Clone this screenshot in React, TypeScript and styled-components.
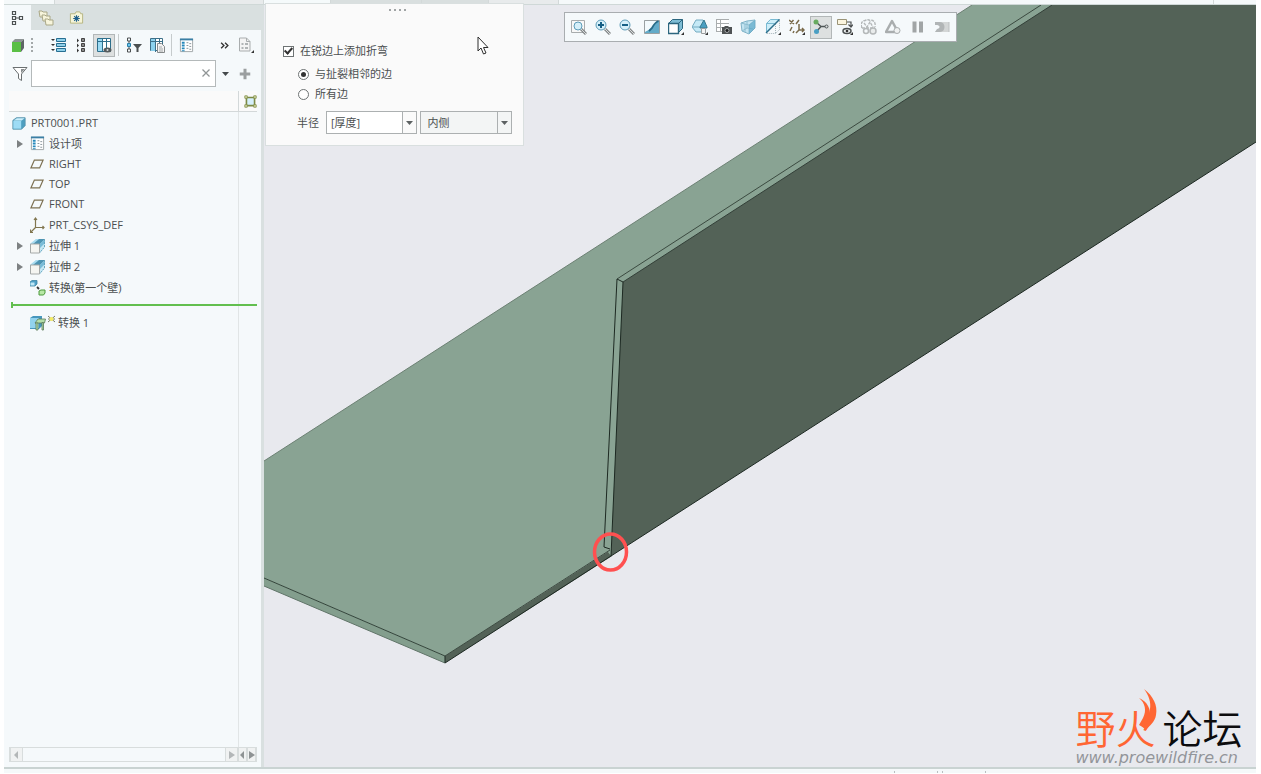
import React from "react";
import styled, { createGlobalStyle } from "styled-components";

const GlobalStyle = createGlobalStyle`
  *, *::before, *::after { box-sizing: border-box; }
  body { margin: 0; background: #fff; }
  button, input, select { font: inherit; color: inherit; }
`;

const Shell = styled.div`
  display: flex;
  flex-direction: column;
  min-height: 100vh;
  padding: 0 5px 1px 4px;
  font: 11px/16px "Open Sans", "Noto Sans CJK SC", sans-serif;
  color: #4b4f50;
`;

const TabStrip = styled.div`
  display: flex;
  height: 5px;
  flex: none;
  background: #f5f9fa;
  border-bottom: 1px solid #cfd8d7;
`;

const StripTab = styled.div<{ $width: number; $tone: string }>`
  flex: none;
  width: ${(p) => p.$width}px;
  background: ${(p) => p.$tone};
  border-right: 1px solid #d3d9d9;
`;

const Main = styled.main`
  display: flex;
  flex: 1;
`;

const StatusStrip = styled.footer`
  display: flex;
  align-items: flex-end;
  justify-content: flex-end;
  gap: 42px;
  height: 6px;
  flex: none;
  padding-right: 270px;
  background: #f5f9fa;
  border-top: 2px solid #c9d3d2;
`;

const StatusTick = styled.i<{ $double?: boolean }>`
  width: ${(p) => (p.$double ? 6 : 1)}px;
  height: 2px;
  border: solid #b9bfc0;
  border-width: 0 ${(p) => (p.$double ? 1 : 0)}px 0 1px;
`;

/* ---------- model tree panel ---------- */

const Sidebar = styled.aside`
  display: flex;
  flex-direction: column;
  flex: none;
  width: 260px;
  background: #f5f9fb;
  border-right: 3px solid #d9e0e0;
`;

const PanelTabs = styled.div`
  display: flex;
  height: 25px;
  background: #d9e0e0;
`;

const PanelTab = styled.button<{ $active?: boolean }>`
  display: flex;
  align-items: center;
  justify-content: center;
  width: ${(p) => (p.$active ? 27 : 30)}px;
  padding: 0;
  border: 0;
  background: ${(p) => (p.$active ? "#f5f9fb" : "transparent")};
`;

const TreeToolbar = styled.div`
  display: flex;
  align-items: center;
  height: 30px;
  padding: 0 4px 0 5px;
`;

const ToolButton = styled.button<{ $width?: number; $active?: boolean }>`
  display: flex;
  align-items: center;
  justify-content: center;
  flex: none;
  width: ${(p) => p.$width ?? 22}px;
  height: 23px;
  padding: 0;
  border: 1px solid ${(p) => (p.$active ? "#b2b7b8" : "transparent")};
  background: ${(p) => (p.$active ? "#dde0e0" : "transparent")};
  color: #44494b;
`;

const Grip = styled.i`
  width: 2px;
  height: 14px;
  margin: 0 14px 0 2px;
  background: repeating-linear-gradient(#a3a8a9 0 2px, transparent 2px 4px);
`;

const Divider = styled.i`
  width: 1px;
  height: 22px;
  margin: 0 3px;
  background: #c6cbcc;
`;

const Spacer = styled.span`
  flex: 1;
`;

const SearchRow = styled.form`
  display: flex;
  align-items: center;
  padding: 0 5px;
`;

const SearchBox = styled.div`
  display: flex;
  flex: 1;
  min-width: 0;
  height: 27px;
  background: #fff;
  border: 1px solid #b4b9ba;
`;

const SearchInput = styled.input`
  flex: 1;
  min-width: 0;
  padding: 0 4px;
  border: 0;
  outline: 0;
  background: transparent;
`;

const TreePanel = styled.div`
  display: flex;
  flex-direction: column;
  flex: 1;
  margin: 4px 4px 0 5px;
  background: linear-gradient(#e1e5e6, #e1e5e6) no-repeat right 18px top / 1px 100%;
`;

const ColumnHeader = styled.div`
  display: flex;
  justify-content: flex-end;
  height: 21px;
  border-bottom: 1px solid #d3d8d9;
  background: #fafafa;
`;

const HeaderCell = styled.span`
  display: flex;
  justify-content: flex-end;
  align-items: center;
  width: 19px;
  border-left: 1px solid #d3d8d9;
`;

const TreeList = styled.ul`
  margin: 0;
  padding: 0;
  list-style: none;
`;

const TreeRow = styled.li<{ $root?: boolean; $datum?: boolean }>`
  display: flex;
  align-items: center;
  gap: 3px;
  height: ${(p) => (p.$datum ? 20 : 21)}px;
  padding-left: 3px;
  white-space: nowrap;
`;

const Expander = styled.button`
  display: flex;
  align-items: center;
  justify-content: center;
  width: 15px;
  height: 16px;
  padding: 0;
  border: 0;
  background: none;
  color: #7d8182;
`;

const ExpanderGap = styled.span`
  width: 15px;
`;

const RowIcon = styled.span<{ $wide?: boolean }>`
  display: flex;
  justify-content: ${(p) => (p.$wide ? "space-between" : "flex-start")};
  width: ${(p) => (p.$wide ? 25 : 16)}px;
`;

const InsertLine = styled.div`
  display: flex;
  align-items: center;
  margin: 4px 0 4px 2px;
  &::before {
    content: "";
    width: 2px;
    height: 6px;
    background: #62bf4f;
  }
  &::after {
    content: "";
    flex: 1;
    height: 2px;
    background: #62bf4f;
  }
`;

const ScrollRow = styled.div`
  display: flex;
  height: 15px;
  margin: 0 4px 5px 5px;
  border: 1px solid #d8dddd;
`;

const ScrollButton = styled.button<{ $width: number; $faint?: boolean }>`
  display: flex;
  align-items: center;
  justify-content: center;
  width: ${(p) => p.$width}px;
  padding: 0;
  border: 0;
  border-right: 1px solid #d8dddd;
  border-left: 1px solid #d8dddd;
  background: #f0f2f2;
  color: ${(p) => (p.$faint ? "#b3b7b8" : "#8e9394")};
`;

/* ---------- graphics area ---------- */

const Viewport = styled.section`
  position: relative;
  flex: 1;
  min-width: 0;
  background: #e8e9ee;
`;

const Scene = styled.svg`
  position: absolute;
  inset: 0;
  width: 100%;
  height: 100%;
`;

const ViewToolbar = styled.div`
  position: absolute;
  top: 7px;
  left: 300px;
  display: flex;
  align-items: center;
  justify-content: space-between;
  width: 393px;
  height: 30px;
  padding: 0 3px;
  background: #f5f9fb;
  border: 1px solid #a9adb0;
`;

const OptionsPanel = styled.form`
  position: absolute;
  top: -2px;
  left: 1px;
  width: 259px;
  padding: 5px 11px 11px 17px;
  background: #fafafa;
  border: 1px solid #d9dfdf;
`;

const DragHandle = styled.div`
  width: 17px;
  height: 2px;
  margin: 0 auto 32px;
  background: repeating-linear-gradient(90deg, #a0a4a5 0 2px, transparent 2px 5px);
`;

const Choice = styled.label<{ $nested?: boolean }>`
  display: flex;
  align-items: center;
  gap: 6px;
  height: ${(p) => (p.$nested ? 20 : 16)}px;
  margin-left: ${(p) => (p.$nested ? 15 : 0)}px;
`;

const FirstChoice = styled.div`
  padding-bottom: 5px;
`;

const CheckBox = styled.input`
  appearance: none;
  display: grid;
  place-items: center;
  width: 11px;
  height: 11px;
  margin: 0;
  background: #fff;
  border: 1px solid #6e7374;
  &:checked::after {
    content: "";
    width: 5px;
    height: 8px;
    border: solid #333;
    border-width: 0 2px 2px 0;
    transform: translateY(-1px) rotate(42deg);
  }
`;

const Radio = styled.input`
  appearance: none;
  display: grid;
  place-items: center;
  width: 11px;
  height: 11px;
  margin: 0;
  background: #fff;
  border: 1px solid #6e7374;
  border-radius: 50%;
  &:checked::after {
    content: "";
    width: 5px;
    height: 5px;
    border-radius: 50%;
    background: #333;
  }
`;

const RadiusRow = styled.div`
  display: flex;
  align-items: center;
  gap: 3px;
  margin: 7px 0 0 14px;
`;

const RadiusLabel = styled.label`
  width: 26px;
  white-space: nowrap;
`;

const Combo = styled.div<{ $muted?: boolean }>`
  display: grid;
  grid-template-columns: 1fr 14px;
  width: 92px;
  height: 23px;
  background: ${(p) => (p.$muted ? "#f3f5f5" : "#fff")};
  border: 1px solid #acb0b1;
`;

const ComboInput = styled.input`
  width: 100%;
  min-width: 0;
  padding: 0 4px;
  border: 0;
  outline: 0;
  background: transparent;
`;

const ComboSelect = styled.select`
  grid-area: 1 / 1 / 2 / 3;
  appearance: none;
  padding: 0 6px;
  border: 0;
  outline: 0;
  background: transparent;
`;

const ComboArrow = styled.span`
  grid-area: 1 / 2;
  display: flex;
  align-items: center;
  justify-content: center;
  border-left: 1px solid #acb0b1;
  color: #5c6162;
  pointer-events: none;
`;

const ComboButton = styled.button`
  display: flex;
  align-items: center;
  justify-content: center;
  padding: 0;
  border: 0;
  border-left: 1px solid #acb0b1;
  background: #fafafa;
  color: #5c6162;
`;

const Pointer = styled.svg`
  position: absolute;
  top: 31px;
  left: 213px;
`;

const Watermark = styled.div`
  position: absolute;
  right: 12px;
  bottom: 0;
  text-align: right;
  white-space: nowrap;
`;

const BrandName = styled.div`
  display: flex;
  gap: 7px;
  font: 350 40px/44px "Noto Sans CJK SC", sans-serif;
  color: #0c0c0e;
`;

const BrandAccent = styled.span`
  color: #ff6633;
`;

const BrandUrl = styled.div`
  padding-right: 6px;
  font: italic 16px/18px "DejaVu Sans", sans-serif;
  color: #93959a;
`;

const Flame = styled.svg`
  position: absolute;
  top: -16px;
  left: 58px;
`;

/* ---------- icons ---------- */

type IconProps = { size?: number; children: React.ReactNode };
const Icon = ({ size = 16, children }: IconProps) => (
  <svg width={size} height={size} viewBox="0 0 16 16" fill="none" aria-hidden="true">
    {children}
  </svg>
);

const ArrowDown = () => (
  <svg width="7" height="4" viewBox="0 0 7 4" aria-hidden="true"><path d="M0 0h7L3.500 4z" fill="currentColor" /></svg>
);
const ArrowRight = ({ flip }: { flip?: boolean }) => (
  <svg width="7" height="8" viewBox="0 0 7 8" aria-hidden="true">
    <path d={flip ? "M5 0v8L1 4z" : "M1 0v8l6-4z"} fill="currentColor" />
  </svg>
);

const Corner = () => <path d="M16 13v3h-3z" fill="#333" />;

const StructureIcon = () => (
  <Icon><path d="M2.500 1.500h3v3h-3zM2.500 6.500h3v3h-3zM2.500 11.500h3v3h-3zM9.500 6.500h3v3h-3zM6 8h3" stroke="#4c5152" strokeWidth="1.200" /></Icon>
);
const FoldersIcon = () => (
  <Icon>
    {[[0, 0], [3, 4], [6, 8]].map(([x, y]) => (
      <path key={x} transform={`translate(${x} ${y})`} d="M1 1h3l1 1h4v5H2z" fill="#f7f5dc" stroke="#a9a786" />
    ))}
  </Icon>
);
const FavoritesIcon = () => (
  <Icon size={15}>
    <path d="M1.500 4h5l1-2h4l1 2h2v10h-13z" fill="#f6f5d8" stroke="#b5b380" />
    <path d="M8 5.500v7M4.500 9h7M5.500 6.500l5 5M10.500 6.500l-5 5" stroke="#1f5f8c" strokeWidth="1.200" />
  </Icon>
);
const GreenCubeIcon = () => (
  <Icon>
    <path d="M1 5l3-3h9l-3 3z" fill="#8d9494" />
    <path d="M10 5l3-3v9l-3 4z" fill="#5e6565" />
    <path d="M1 5h9v10H1z" fill="#5abf45" />
  </Icon>
);
const ListBlueIcon = () => (
  <Icon>
    <path d="M5.500 1.500h9v3h-9zM5.500 6.500h9v3h-9zM5.500 11.500h9v3h-9z" fill="#8fd0ea" stroke="#276f92" />
    <path d="M0 2h4L2 4zM0 7h4L2 9zM0 12h4l-2 2z" fill="#333" />
  </Icon>
);
const TreeCollapseIcon = () => (
  <Icon>
    <path d="M7.500 1.500h3v3h-3zM7.500 6.500h3v3h-3zM7.500 11.500h3v3h-3z" fill="#888" stroke="#444" />
    <path d="M3 1.500v4l2-2zM3 6.500v4l2-2zM3 11.500v4l2-2z" fill="#333" />
  </Icon>
);
const ColumnsEyeIcon = () => (
  <Icon>
    <path d="M1.500 1.500h13v13h-13z" fill="#fff" stroke="#2e6f8c" />
    <path d="M2 2h4v12H2z" fill="#9ddcf5" />
    <path d="M1 4.500h14M6.500 1v14M10.500 1v11" stroke="#2e6f8c" />
    <ellipse cx="11.500" cy="13" rx="4" ry="2.500" fill="#555b5d" /><circle cx="11.500" cy="13" r="1" fill="#ddd" />
  </Icon>
);
const TreeFilterIcon = () => (
  <Icon>
    <path d="M1.500 1h3v3h-3zM1.500 12h3v3h-3zM3 4v8" stroke="#4b4f50" />
    <path d="M1.500 6.500h3v3h-3z" fill="#6cc4ec" stroke="#2a7fa8" />
    <path d="M7 7h9l-3.500 4v4h-2v-4z" fill="#4b4f50" />
  </Icon>
);
const ColumnsDocIcon = () => (
  <Icon>
    <path d="M1.500 1.500h12v12h-12z" fill="#fff" stroke="#3d7089" />
    <path d="M2 2h4v12H2z" fill="#8cd2ee" /><path d="M1 4.500h13M6.500 1v14M10.500 1v5" stroke="#3d7089" />
    <path d="M8.500 6.500h4l3 3v6h-7z" fill="#f3f3f3" stroke="#85898a" /><path d="M10 10h3M10 12h4M10 14h4" stroke="#a5a9aa" />
  </Icon>
);
const DesignListIcon = ({ size = 15 }: { size?: number }) => (
  <Icon size={size}>
    <path d="M1.500 1.500h13v13h-13z" fill="#fff" stroke="#9fa5a6" /><path d="M1 1.500h14" stroke="#3a7fa5" strokeWidth="2" />
    <path d="M4.500 4v10" stroke="#2588bb" strokeWidth="3" strokeDasharray="2 1" />
    <path d="M8 5h2M8 8h2M8 11h2M11 6h2M11 9h2M11 12h2" stroke="#87949a" />
  </Icon>
);
const PageIcon = () => (
  <Icon>
    <path d="M1.500 1h7l3.500 3.500V14H1.500z" fill="#f4f4f4" stroke="#a9adae" /><path d="M8.500 1v3.500H12" stroke="#a9adae" />
    <path d="M3.500 7h2M3.500 11h2M7 7h3M7 11h3" stroke="#b0b4b5" strokeWidth="2" /><Corner />
  </Icon>
);
const FunnelIcon = () => (
  <Icon><path d="M1 1.500h14L9.500 8v6.500l-3-2V8z" fill="#fff" stroke="#6b7071" /><path d="M9 3h4L9 7z" fill="#888d8e" /></Icon>
);
const PlusIcon = () => (
  <Icon size={12}><path d="M8 1v14M1 8h14" stroke="#9b9fa0" strokeWidth="4" /></Icon>
);
const CloseIcon = () => (
  <Icon size={8}><path d="M1 1l14 14M15 1L1 15" stroke="#909596" strokeWidth="2.500" /></Icon>
);
const ColumnKeyIcon = () => (
  <Icon size={13}>
    <path d="M3 3h10v10H3z" fill="#d5effa" stroke="#7c8a45" strokeWidth="2" />
    <path d="M1 1h3v3H1zM12 1h3v3h-3zM1 12h3v3H1zM12 12h3v3h-3z" fill="#e5e9ba" stroke="#7c8a45" />
  </Icon>
);
const PartIcon = () => (
  <Icon size={14}>
    <path d="M1 5l4-3h10v9l-4 4H1z" fill="#4e9fc0" stroke="#5793ab" strokeLinejoin="round" /><path d="M1.500 5.500h9v9h-9z" fill="#9edcf5" /><path d="M2 5l3.500-2.500h9L11 5z" fill="#cdeffb" />
  </Icon>
);
const PlaneIcon = () => (
  <Icon size={14}><path d="M5 3.500h10L11 12.500H1z" stroke="#7d7153" strokeWidth="1.400" /></Icon>
);
const CsysIcon = () => (
  <Icon><path d="M5.500 1v9.500H14M5.500 10.500L1 15M4 3l1.500-2L7 3M12.500 9l1.500 1.500-1.500 1.500M.5 12.500V15.500H3" stroke="#81764f" strokeWidth="1.200" /></Icon>
);
const ExtrudeIcon = () => (
  <Icon>
    <path d="M0 6l6-5h9v8l-5 6z" fill="#c7e8f4" /><path d="M0 6l6-5h3L3 6z" fill="#a9dcf0" /><path d="M3 6l6-5h6l-5 5z" fill="#4e94b2" />
    <path d="M10 6l5-5v4l-5 5z" fill="#79bcd8" /><path d="M14.500 1v8l-5 6" stroke="#6aa7bf" strokeDasharray="2 1" />
    <path d="M.5 6h9v9h-9z" fill="#f5f5f1" stroke="#a5a9a8" />
  </Icon>
);
const ConvertIcon = () => (
  <Icon>
    <path d="M0 2l2-1.500h5V4L5 6H0z" fill="#4e9fc6" stroke="#3e84a3" strokeWidth=".8" /><path d="M.5 2.500h4v3h-4z" fill="#bfe7f7" />
    <path d="M7 7l2 2" stroke="#333" strokeWidth="1.800" /><path d="M9 11l2-1h4v3l-1.500 2H9z" fill="#b8e8a6" stroke="#4d9a3c" />
  </Icon>
);
const ConvertWallIcon = () => (
  <Icon>
    <path d="M0 3l3-2h9v10l-3 3H0z" fill="#4797bd" /><path d="M0 3h9v10H0z" fill="#92d3ee" />
    <path d="M5 8l3-4h7.500l-1 4z" fill="#b4dfaa" stroke="#5b7b5a" strokeWidth=".8" />
    <path d="M5.500 8H8v7H6V9zM12 7.500h1.500V15H12z" fill="#b4dfaa" stroke="#5b7b5a" strokeWidth=".8" />
  </Icon>
);
const SparkIcon = () => (
  <svg width="7" height="10" viewBox="0 0 7 10" aria-hidden="true">
    <path d="M0 1l7 6M7 1L0 7M0 4h7" stroke="#777b65" /><circle cx="3.500" cy="4" r="2" fill="#f4ec62" />
  </svg>
);

const Lens = ({ sign }: { sign?: "plus" | "minus" }) => (
  <Icon>
    {!sign && <path d="M.5 1.500h13v12H.5z" fill="#f8f8f8" stroke="#a8acad" />}
    <path d="M10 10l5 5" stroke="#85898a" strokeWidth="3" /><path d="M10 10l5 5" stroke="#d9dcdd" />
    <circle cx={sign ? 6 : 7} cy={sign ? 6 : 7} r={sign ? 5 : 4} fill="#d5eff9" stroke="#5c9cb8" />
    {sign && <path d={sign === "plus" ? "M3 6h6M6 3v6" : "M3 6h6"} stroke="#155f85" strokeWidth="2" />}
  </Icon>
);
const RepaintIcon = () => (
  <Icon>
    <path d="M.5 1.500h15v13H.5z" fill="#63abc9" stroke="#9aa0a2" /><path d="M1 2h13.500C12 3 9 7 8 9 6 11 4 11 1 13z" fill="#f3fafd" />
    <path d="M14.500 2C12 3 9 7 8 9l-3 3" stroke="#286b88" strokeWidth="1.800" />
  </Icon>
);
const DisplayStyleIcon = () => (
  <Icon><path d="M.5 4.500l4-4h10v9l-4 4" fill="#7ebdd5" stroke="#2b667f" /><path d="M.5 4.500h10v10H.5z" fill="#fff" stroke="#2b667f" strokeWidth="1.400" /><path d="M10.500 4.500l4-4" stroke="#2b667f" /><Corner /></Icon>
);
const SavedViewsIcon = () => (
  <Icon>
    <path d="M0 8l4-7h7l2 7-2 5H4z" fill="#c5e9f6" stroke="#74abc1" /><path d="M0 8h13" stroke="#74abc1" />
    <path d="M8 8l4-7 3 7v1H8z" fill="#4a9fc2" stroke="#36798f" /><path d="M9.500 9.500h4v5h-4z" fill="#f5f5f5" stroke="#989d9e" /><Corner />
  </Icon>
);
const ViewManagerIcon = () => (
  <Icon>
    <path d="M.5.500h12v13H.5z" fill="#fff" /><path d="M0 .5h13M0 4.500h13M0 8.500h13M0 12.500h7M4.500 0v13M.5 0v13" stroke="#a9adae" />
    <path d="M6 8h2l1-1h3l1 1h3v7H6z" fill="#4f5354" /><circle cx="11" cy="11.500" r="2" fill="#1d1f20" stroke="#a5a8a9" />
  </Icon>
);
const PerspectiveIcon = () => (
  <Icon>
    <path d="M1 4l6-2 8-1v8l-6 6-7-3z" fill="#c4e5f2" stroke="#7fb2c7" /><path d="M1 4l8 2v9M9 6l6-5M5 5v8M7 2v7l-5 3M7 9l6 1" stroke="#8dbdd0" />
    <path d="M9 6l6-5v8l-6 6z" fill="#5da8c7" opacity=".7" />
  </Icon>
);
const SectionIcon = () => (
  <Icon>
    <path d="M1.500 4.500l4-4h9v10l-4 4h-9zM10.500 5v9M2 4.500h8" stroke="#a5b4ba" strokeDasharray="1 1" /><path d="M1 4.500l4-4h9L1.500 14z" fill="#c3ebf9" opacity=".8" />
    <path d="M1.500 13V4.500l4-4h8.500M1.500 4.500h8" stroke="#79bad3" /><path d="M1 14L14.500.5" stroke="#2d6f8b" strokeWidth="1.500" /><Corner />
  </Icon>
);
const DatumFilterIcon = () => (
  <Icon><path d="M0 1l5 4M4.500 1L1 5M7 5l3-4M1 12l2-4M4 14l1-2M10 5v6h4M10 11l-3 3M13 9l2 2-2 2" stroke="#7a6b4b" strokeWidth="1.500" /><Corner /></Icon>
);
const SpinCenterIcon = () => (
  <Icon>
    <path d="M3 3l5 4.500L4 12M8 7.500h5" stroke="#4e5556" strokeWidth="1.400" /><circle cx="3" cy="3" r="2.500" fill="#68aa60" />
    <circle cx="3.500" cy="12.500" r="2.500" fill="#4a9fc3" /><circle cx="13.500" cy="7.500" r="1.500" fill="#dde0e0" stroke="#4e5556" />
  </Icon>
);
const AnnotationIcon = () => (
  <Icon>
    <path d="M.5.500h9v5h-9z" fill="#fbf5df" stroke="#999377" /><path d="M10 3h4v4M11.500 5.500L14 8l2-2.500" stroke="#4b4f50" strokeWidth="1.200" />
    <ellipse cx="10" cy="12" rx="4" ry="2.500" fill="#e9eded" stroke="#4b4f50" strokeWidth="1.500" /><circle cx="10" cy="12" r="1.300" fill="#333" /><Corner />
  </Icon>
);
const MeshIcon = () => (
  <Icon>
    <path d="M1 9C-.5 6 0 2 4 1.500c2-1 4-1 5 0C12 .5 15 3 14 8M1 9h13M3 4l3 4 3-5 3 5" stroke="#b4b8b9" strokeWidth="1.400" strokeDasharray="3 1" />
    <circle cx="5" cy="12" r="2.500" stroke="#b4b8b9" strokeWidth="1.500" /><circle cx="12" cy="12" r="3" fill="#e9ecec" stroke="#b4b8b9" strokeWidth="1.500" />
  </Icon>
);
const WarningIcon = () => (
  <Icon><path d="M7 2l6 11H1z" stroke="#a9adae" strokeWidth="2.500" strokeLinejoin="round" /><circle cx="12" cy="11.500" r="3" fill="#eff1f1" stroke="#a9adae" /></Icon>
);
const PauseIcon = () => <Icon><path d="M4.500 2.500v11M11 2.500v11" stroke="#a1a5a6" strokeWidth="4" /></Icon>;
const ResumeIcon = () => (
  <Icon>
    <path d="M1 3h14v10H1l5-5z" fill="#d3d6d6" /><path d="M1 3h5c6 0 6 10 0 10H1l2-3c3 0 4-4 0-4H1z" fill="#b1b5b6" />
    <path d="M15 3v10" stroke="#bbbfc0" />
  </Icon>
);

/* ---------- data ---------- */

type Node = { label: string; icon: React.ReactNode; datum?: boolean; expandable?: boolean };

const NODES: Node[] = [
  { label: "设计项", icon: <DesignListIcon />, expandable: true },
  { label: "RIGHT", icon: <PlaneIcon />, datum: true },
  { label: "TOP", icon: <PlaneIcon />, datum: true },
  { label: "FRONT", icon: <PlaneIcon />, datum: true },
  { label: "PRT_CSYS_DEF", icon: <CsysIcon /> },
  { label: "拉伸 1", icon: <ExtrudeIcon />, expandable: true },
  { label: "拉伸 2", icon: <ExtrudeIcon />, expandable: true },
  { label: "转换(第一个壁)", icon: <ConvertIcon /> },
];

const VIEW_TOOLS: { name: string; icon: React.ReactNode; active?: boolean }[] = [
  { name: "重新调整", icon: <Lens /> },
  { name: "放大", icon: <Lens sign="plus" /> },
  { name: "缩小", icon: <Lens sign="minus" /> },
  { name: "重画", icon: <RepaintIcon /> },
  { name: "显示样式", icon: <DisplayStyleIcon /> },
  { name: "已保存方向", icon: <SavedViewsIcon /> },
  { name: "视图管理器", icon: <ViewManagerIcon /> },
  { name: "透视图", icon: <PerspectiveIcon /> },
  { name: "截面", icon: <SectionIcon /> },
  { name: "基准显示过滤器", icon: <DatumFilterIcon /> },
  { name: "旋转中心", icon: <SpinCenterIcon />, active: true },
  { name: "注释显示", icon: <AnnotationIcon /> },
  { name: "仿真", icon: <MeshIcon /> },
  { name: "警告", icon: <WarningIcon /> },
  { name: "暂停", icon: <PauseIcon /> },
  { name: "继续", icon: <ResumeIcon /> },
];

const STRIP_TABS = [
  { width: 51, tone: "#f5f9fa" },
  { width: 209, tone: "#e8ebec" },
  { width: 67, tone: "#f5fafb" },
  { width: 91, tone: "#d9dfdf" },
  { width: 67, tone: "#d9dfdf" },
  { width: 70, tone: "#e8ebec" },
  { width: 655, tone: "#f5f9fa" },
];

/* ---------- sections ---------- */

const ModelTree = () => (
  <Sidebar>
    <PanelTabs>
      <PanelTab type="button" $active aria-label="模型树"><StructureIcon /></PanelTab>
      <PanelTab type="button" aria-label="文件夹浏览器"><FoldersIcon /></PanelTab>
      <PanelTab type="button" aria-label="收藏夹"><FavoritesIcon /></PanelTab>
    </PanelTabs>
    <TreeToolbar>
      <ToolButton type="button" $width={20} aria-label="模型"><GreenCubeIcon /></ToolButton>
      <Grip />
      <ToolButton type="button" $width={24} aria-label="全部展开"><ListBlueIcon /></ToolButton>
      <ToolButton type="button" aria-label="全部折叠"><TreeCollapseIcon /></ToolButton>
      <ToolButton type="button" $active aria-label="显示列"><ColumnsEyeIcon /></ToolButton>
      <Divider />
      <ToolButton type="button" $width={24} aria-label="树过滤器"><TreeFilterIcon /></ToolButton>
      <ToolButton type="button" aria-label="树列"><ColumnsDocIcon /></ToolButton>
      <Divider />
      <ToolButton type="button" aria-label="设计项"><DesignListIcon /></ToolButton>
      <Spacer />
      <ToolButton type="button" aria-label="更多">
        <Icon size={9}><path d="M2 3l5 5-5 5M9 3l5 5-5 5" stroke="#333" strokeWidth="2.400" /></Icon>
      </ToolButton>
      <ToolButton type="button" aria-label="设置"><PageIcon /></ToolButton>
    </TreeToolbar>
    <SearchRow>
      <ToolButton type="button" aria-label="过滤"><FunnelIcon /></ToolButton>
      <SearchBox>
        <SearchInput type="text" aria-label="搜索模型树" />
        <ToolButton type="button" $width={18} aria-label="清除"><CloseIcon /></ToolButton>
      </SearchBox>
      <ToolButton type="button" $width={18} aria-label="搜索选项"><ArrowDown /></ToolButton>
      <ToolButton type="button" aria-label="添加"><PlusIcon /></ToolButton>
    </SearchRow>
    <TreePanel>
      <ColumnHeader><HeaderCell><ColumnKeyIcon /></HeaderCell></ColumnHeader>
      <TreeList>
        <TreeRow><RowIcon><PartIcon /></RowIcon>PRT0001.PRT</TreeRow>
        {NODES.map((n) => (
          <TreeRow key={n.label} $datum={n.datum}>
            {n.expandable ? <Expander type="button" aria-label={`展开 ${n.label}`}><ArrowRight /></Expander> : <ExpanderGap />}
            <RowIcon>{n.icon}</RowIcon>
            {n.label}
          </TreeRow>
        ))}
      </TreeList>
      <InsertLine />
      <TreeList>
        <TreeRow><ExpanderGap /><RowIcon $wide><ConvertWallIcon /><SparkIcon /></RowIcon>转换 1</TreeRow>
      </TreeList>
    </TreePanel>
    <ScrollRow>
      <ScrollButton type="button" $width={13} $faint aria-label="向左滚动"><ArrowRight flip /></ScrollButton>
      <Spacer />
      <ScrollButton type="button" $width={13} $faint aria-label="向右滚动"><ArrowRight /></ScrollButton>
      <ScrollButton type="button" $width={9} aria-label="列向左"><ArrowRight flip /></ScrollButton>
      <ScrollButton type="button" $width={9} aria-label="列向右"><ArrowRight /></ScrollButton>
    </ScrollRow>
  </Sidebar>
);

const SheetMetalPart = () => (
  <Scene viewBox="264 5 992 762" preserveAspectRatio="xMinYMin slice" aria-hidden="true">
    <path d="M264 461L972 5H1060L640 300 610 550 445 656 264 578z" fill="#89a393" />
    <path d="M264 578L445 656V663L264 586z" fill="#839e8d" />
    <path d="M445 656L612 549V556L445 663z" fill="#536257" />
    <path d="M617 279L1041 5H1052L623 282 611 556 604 547z" fill="#89a393" />
    <path d="M623 282L1052 5H1256V142L611 556z" fill="#536257" />
    <g fill="none" stroke="#1d2922" strokeWidth="1">
      <path d="M264 461L972 5" stroke="#6c8073" />
      <path d="M264 578L445 656" stroke="#33443a" />
      <path d="M264 586L445 663" stroke="#607468" />
      <path d="M445 656V663L611 556" />
      <path d="M445 656L610 550" stroke="#3b4a40" />
      <path d="M617 279L1041 5" stroke="#3b4a40" />
      <path d="M623 282L1052 5" stroke="#333f38" />
      <path d="M623 282L611 556L1256 142" />
      <path d="M623 282L617 279L604 547L610 549" />
    </g>
    <ellipse cx="610.500" cy="552" rx="16" ry="18" fill="none" stroke="#ff5050" strokeWidth="3.500" />
  </Scene>
);

const BendOptions = () => (
  <OptionsPanel>
    <DragHandle />
    <FirstChoice>
      <Choice><CheckBox type="checkbox" defaultChecked />在锐边上添加折弯</Choice>
    </FirstChoice>
    <Choice $nested><Radio type="radio" name="edges" defaultChecked />与扯裂相邻的边</Choice>
    <Choice $nested><Radio type="radio" name="edges" />所有边</Choice>
    <RadiusRow>
      <RadiusLabel htmlFor="radius">半径</RadiusLabel>
      <Combo>
        <ComboInput id="radius" type="text" defaultValue="[厚度]" />
        <ComboButton type="button" aria-label="半径列表"><ArrowDown /></ComboButton>
      </Combo>
      <Combo $muted>
        <ComboSelect aria-label="半径侧" defaultValue="内侧"><option>内侧</option><option>外侧</option></ComboSelect>
        <ComboArrow><ArrowDown /></ComboArrow>
      </Combo>
    </RadiusRow>
  </OptionsPanel>
);

export default function App() {
  return (
    <>
      <GlobalStyle />
      <Shell>
        <TabStrip>
          {STRIP_TABS.map((t, i) => <StripTab key={i} $width={t.width} $tone={t.tone} />)}
        </TabStrip>
        <Main>
          <ModelTree />
          <Viewport>
            <SheetMetalPart />
            <BendOptions />
            <ViewToolbar>
              {VIEW_TOOLS.map((t) => (
                <ToolButton key={t.name} type="button" aria-label={t.name} $active={t.active}>{t.icon}</ToolButton>
              ))}
            </ViewToolbar>
            <Pointer width="12" height="19" viewBox="0 0 12 19" aria-hidden="true">
              <path d="M1 1v14l3-3 2.500 6 2.500-1-2.500-5.500H11z" fill="#fff" stroke="#2d2d2d" />
            </Pointer>
            <Watermark>
              <BrandName><BrandAccent>野火</BrandAccent><span>论坛</span></BrandName>
              <BrandUrl>www.proewildfire.cn</BrandUrl>
              <Flame width="28" height="44" viewBox="0 0 28 44" aria-hidden="true">
                <path d="M11 0C20 7 25 16 23 26 22 33 17 36 13 41L7 36C12 31 16 27 17 20 18 13 16 7 11 0z" fill="#ff6633" />
                <path d="M6 9C12 14 14 21 10 29L6 36 10 38C16 32 19 23 15 17 13 13 10 11 6 9z" fill="#ff6633" />
              </Flame>
            </Watermark>
          </Viewport>
        </Main>
        <StatusStrip><StatusTick /><StatusTick $double /><StatusTick /></StatusStrip>
      </Shell>
    </>
  );
}
